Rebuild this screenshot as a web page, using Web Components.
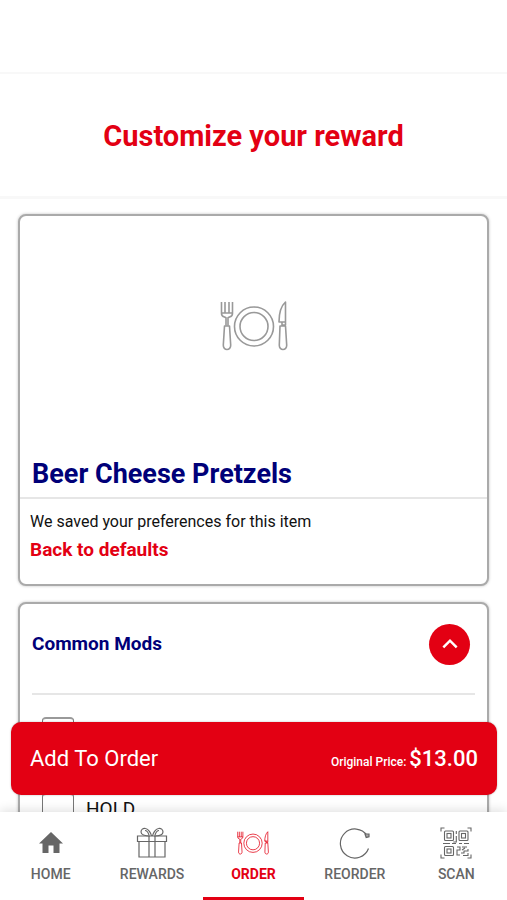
<!DOCTYPE html>
<html lang="en">
<head>
<meta charset="utf-8">
<meta name="viewport" content="width=device-width, initial-scale=1">
<title>Customize your reward</title>
<style>
  body {
    margin: 0;
    font-family: Roboto, "Liberation Sans", sans-serif;
    color: #111;
    background: #fff;
    --red: #e30013;
    --navy: #000078;
    --grey: #666;
  }
</style>
</head>
<body>
<order-app>
  <page-title slot="title">Customize your reward</page-title>
  <item-card>
    <span slot="name">Beer Cheese Pretzels</span>
    <span slot="note">We saved your preferences for this item</span>
    <span slot="reset">Back to defaults</span>
  </item-card>
  <mod-group>
    <span slot="name">Common Mods</span>
    <mod-option></mod-option>
    <mod-option>HOLD</mod-option>
  </mod-group>
  <add-bar slot="action">
    Add To Order
    <span slot="label">Original Price:</span>
    <span slot="price">$13.00</span>
  </add-bar>
  <tab-bar slot="tabs">
    <tab-item icon="home">HOME</tab-item>
    <tab-item icon="gift">REWARDS</tab-item>
    <tab-item icon="plate" active>ORDER</tab-item>
    <tab-item icon="reload">REORDER</tab-item>
    <tab-item icon="qr">SCAN</tab-item>
  </tab-bar>
</order-app>

<script>
const icons = {
  home: `<svg viewBox="0 0 32 32"><path fill="currentColor" d="M16 5 4 16.500h3.500V26h6v-7.500h5V26h6v-9.500H28z"/></svg>`,
  gift: `<svg viewBox="0 0 32 32" fill="none" stroke="currentColor" stroke-width="1.2">
    <path d="M1.5 9h29v5.500h-29zM3 14.500h26V30H3zM13 9v21M19 9v21"/>
    <path d="M14 9C9 9 5 7.500 5 5c0-2.500 2-4 4.500-3.500C12.500 2 15 6 15.500 9M18 9c5 0 9-1.500 9-4 0-2.500-2-4-4.500-3.500C19.500 2 17 6 16.500 9"/>
    <path d="M13 8C12 5 10.500 3.500 9 3.500M19 8c1-3 2.500-4.500 4-4.500"/></svg>`,
  plate: `<svg viewBox="0 0 68 50" fill="none" stroke="currentColor" stroke-width="1.6" stroke-linejoin="round">
    <circle cx="34" cy="25.500" r="19.500"/><circle cx="34" cy="25.500" r="14"/>
    <path d="M1.500 1v11.500c0 2 1 3 3 3.500l1.500.8v8M12.500 1v11.500c0 2-1 3-3 3.500l-1.500.8v8M5 1v11M9 1v11M1.500 12h11"/>
    <path d="M4.500 25h5l1.200 19c.3 6-7.700 6-7.400 0z"/>
    <path d="M65.500 1v23h-3.500v-3h-3c0-8 2-16 6.500-20zM59 21h6.500M60 25h5.500l1.200 19c.3 6-7.700 6-7.400 0z"/></svg>`,
  reload: `<svg viewBox="0 0 32 32" fill="none" stroke="currentColor" stroke-width="1.200">
    <path d="M29.500 21.500A14.500 14.500 0 1 1 28 8.500"/><path d="M26 7l1.200 3.500 2.800-.8V7z" fill="#aaa"/></svg>`,
  qr: `<svg viewBox="0 0 32 32" fill="none" stroke="currentColor" stroke-width="1.100">
    <path d="M1 4.500V1h3.500M27.500 1H31v3.500M31 27.500V31h-3.500M4.500 31H1v-3.500"/>
    <rect x="4.500" y="4" width="9" height="9.500" rx="1"/><rect x="19" y="4" width="9" height="9.500" rx="1"/><rect x="4.500" y="19.500" width="9" height="9" rx="1"/>
    <rect x="7" y="6.500" width="4" height="4.500"/><rect x="21.500" y="6.500" width="4" height="4.500"/><rect x="7" y="22" width="4" height="4"/>
    <path d="M16.300 4v3M16.300 9v6h-3M3 16.500h7M12 16.500h4M19 16.500h3M24 16.500h5M17 20h3v3h-3v5h3M22 20h5M28 22v2h-4v2h-3M23 28.500h5V26M22 23l3-2"/></svg>`,
  chevron: `<svg viewBox="0 0 24 24" fill="none" stroke="currentColor" stroke-width="3"><path d="M4 16l8-8 8 8"/></svg>`
};

// small helper so every element gets its own open shadow root
function attach(el, html) {
  const template = document.createElement('template');
  template.innerHTML = html;
  const root = el.attachShadow({ mode: 'open' });
  root.appendChild(template.content.cloneNode(true));
  return root;
}

class OrderApp extends HTMLElement {
  constructor() {
    super();
    attach(this, `
      <style>
        :host { display: flex; flex-direction: column; height: 100vh; }
        .view { position: relative; flex: 1; min-height: 0; display: flex; flex-direction: column; }
        header { height: 72px; flex: none; border-bottom: 2px solid #f8f8f8; }
        main {
          flex: 1;
          min-height: 0;
          overflow: hidden;
          display: flex;
          flex-direction: column;
        }
        .cards { display: flex; flex-direction: column; gap: 16px; padding: 15px 18px; }
        /* the action floats over the list */
        .action { position: absolute; left: 11px; right: 10px; bottom: 17px; }
      </style>
      <div class="view">
        <header></header>
        <main>
          <slot name="title"></slot>
          <div class="cards"><slot></slot></div>
        </main>
        <div class="action"><slot name="action"></slot></div>
      </div>
      <slot name="tabs"></slot>
    `);
  }
}

class PageTitle extends HTMLElement {
  constructor() {
    super();
    attach(this, `
      <style>
        :host { display: block; padding: 44px 16px 42px; border-bottom: 3px solid #f8f8f8; }
        h1 { margin: 0; font-size: 29px; line-height: 36px; font-weight: 700; text-align: center; color: var(--red); }
      </style>
      <h1><slot></slot></h1>
    `);
  }
}

const cardStyle = `
  :host {
    display: block;
    border: 2px solid #aaa;
    border-radius: 8px;
    background: #fff;
    box-shadow: 0 0 3px rgba(0, 0, 0, .25);
  }
`;

class ItemCard extends HTMLElement {
  constructor() {
    super();
    attach(this, `
      <style>
        ${cardStyle}
        .picture { display: flex; align-items: center; justify-content: center; height: 220px; color: #999; }
        .picture svg { width: 68px; height: 50px; }
        h2 { margin: 0; padding: 20px 12px 5px; font-size: 27px; line-height: 36px; font-weight: 700; color: var(--navy); }
        .saved { padding: 11px 10px 18px; border-top: 2px solid #e6e6e6; }
        p { margin: 0; font-size: 16px; line-height: 24px; }
        a { display: inline-block; font-size: 19px; line-height: 32px; font-weight: 700; color: var(--red); text-decoration: none; }
      </style>
      <div class="picture">${icons.plate}</div>
      <h2><slot name="name"></slot></h2>
      <div class="saved">
        <p><slot name="note"></slot></p>
        <a href="#"><slot name="reset"></slot></a>
      </div>
    `);
  }
}

class ModGroup extends HTMLElement {
  constructor() {
    super();
    attach(this, `
      <style>
        ${cardStyle}
        :host { padding: 0 12px; }
        .head {
          display: flex;
          align-items: center;
          justify-content: space-between;
          height: 91px;
          padding: 0 5px 9px 0;
          box-sizing: border-box;
          border-bottom: 2px solid #e6e6e6;
        }
        h3 { margin: 0; font-size: 19px; line-height: 24px; font-weight: 700; color: var(--navy); }
        button {
          display: flex;
          align-items: center;
          justify-content: center;
          width: 41px;
          height: 41px;
          padding: 0;
          border: 0;
          border-radius: 50%;
          color: #fff;
          background: var(--red);
        }
        button svg { width: 20px; height: 20px; }
        .options { display: grid; gap: 44px; padding: 22px 10px; }
      </style>
      <div class="head">
        <h3><slot name="name"></slot></h3>
        <button aria-label="Collapse">${icons.chevron}</button>
      </div>
      <div class="options"><slot></slot></div>
    `);
  }
}

class ModOption extends HTMLElement {
  constructor() {
    super();
    attach(this, `
      <style>
        :host { display: block; }
        label { display: flex; align-items: center; gap: 12px; font-size: 19px; line-height: 24px; }
        input {
          appearance: none;
          width: 32px;
          height: 32px;
          margin: 0;
          border: 1px solid #777;
          border-top: 2px solid #999;
          border-radius: 4px;
          background: #fff;
        }
      </style>
      <label><input type="checkbox"><slot></slot></label>
    `);
  }
}

class AddBar extends HTMLElement {
  constructor() {
    super();
    attach(this, `
      <style>
        :host { display: block; }
        button {
          display: flex;
          align-items: center;
          justify-content: space-between;
          width: 100%;
          height: 73px;
          padding: 0 19px;
          border: 0;
          border-radius: 10px;
          font: 400 22px/32px Roboto, "Liberation Sans", sans-serif;
          color: #fff;
          background: var(--red);
          box-shadow: 0 0 2px rgba(0, 0, 0, .3);
        }
        .total { display: flex; align-items: baseline; gap: 3px; font-weight: 500; }
        .label { font-size: 12px; line-height: 16px; }
        .price { font-size: 22px; }
      </style>
      <button>
        <span><slot></slot></span>
        <span class="total"><span class="label"><slot name="label"></slot></span><span class="price"><slot name="price"></slot></span></span>
      </button>
    `);
  }
}

class TabBar extends HTMLElement {
  constructor() {
    super();
    attach(this, `
      <style>
        :host { display: block; position: relative; background: #fff; box-shadow: 0 -2px 10px rgba(0, 0, 0, .12); }
        nav { display: grid; grid-template-columns: repeat(5, 1fr); }
      </style>
      <nav><slot></slot></nav>
    `);
  }
}

class TabItem extends HTMLElement {
  constructor() {
    super();
    attach(this, `
      <style>
        :host { display: block; color: var(--grey); }
        :host([active]) { color: var(--red); }
        a {
          display: flex;
          flex-direction: column;
          align-items: center;
          gap: 5px;
          padding: 15px 0 13px;
          border-bottom: 3px solid transparent;
          font-size: 14px;
          line-height: 20px;
          font-weight: 500;
          color: inherit;
          text-decoration: none;
        }
        :host([active]) a { border-color: var(--red); font-weight: 700; }
        svg { width: 32px; height: 32px; }
      </style>
      <a href="#">${icons[this.getAttribute('icon')]}<span><slot></slot></span></a>
    `);
  }
}

customElements.define('order-app', OrderApp);
customElements.define('page-title', PageTitle);
customElements.define('item-card', ItemCard);
customElements.define('mod-group', ModGroup);
customElements.define('mod-option', ModOption);
customElements.define('add-bar', AddBar);
customElements.define('tab-bar', TabBar);
customElements.define('tab-item', TabItem);
</script>
</body>
</html>
